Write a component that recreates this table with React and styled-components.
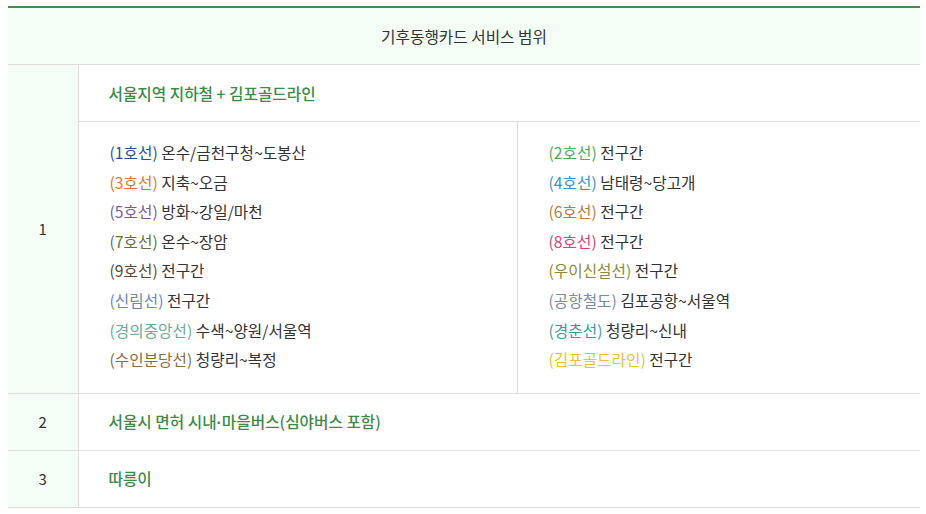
import React from "react";
import styled, { createGlobalStyle } from "styled-components";

const GlobalStyle = createGlobalStyle`
  body {
    margin: 6px 6px 0 8px;
    background: #fff;
    font-family: "Noto Sans CJK KR", "Noto Sans", sans-serif;
  }
`;

const Table = styled.table`
  width: 912px;
  border-collapse: collapse;
  table-layout: fixed;
  border-top: 2px solid #3f8f4f;
  font-size: 15.7px;
  color: #333;

  td,
  th {
    border-bottom: 1px solid #ddd;
  }
`;

const HeadCell = styled.th`
  height: 56px;
  padding: 0;
  background: #f4fdf5;
  font-weight: 400;
  text-align: center;
  color: #333;
`;

const NumCell = styled.td`
  width: 70px;
  padding: 0;
  background: #f4fdf5;
  border-right: 1px solid #ddd;
  text-align: center;
  color: #333;
  font-size: 15px;
`;

const TitleCell = styled.td`
  height: 56px;
  padding: 0 30px;
  color: #3b8a47;
  font-weight: 500;
`;

const Dot = styled.span`
  font-family: "Liberation Sans", sans-serif;
  font-weight: 700;
`;

const ListCell = styled.td`
  vertical-align: top;
  padding: 16px 30px 18px 31px;
  border-right: ${(p) => (p.$divider ? "1px solid #ddd" : "none")};
`;

const List = styled.ul`
  margin: 0;
  padding: 0;
  list-style: none;
`;

const Item = styled.li`
  line-height: 29.6px;
  white-space: nowrap;
`;

const Line = styled.span`
  color: ${(p) => p.$color};
`;

const leftLines = [
  ["1호선", "#2a4f96", "온수/금천구청~도봉산"],
  ["3호선", "#d9773a", "지축~오금"],
  ["5호선", "#7d5a9c", "방화~강일/마천"],
  ["7호선", "#63733a", "온수~장암"],
  ["9호선", "#5a4a30", "전구간"],
  ["신림선", "#6b86c0", "전구간"],
  ["경의중앙선", "#6bab96", "수색~양원/서울역"],
  ["수인분당선", "#8a6d40", "청량리~복정"],
];

const rightLines = [
  ["2호선", "#4aab5a", "전구간"],
  ["4호선", "#3a8fd0", "남태령~당고개"],
  ["6호선", "#b87a3e", "전구간"],
  ["8호선", "#d6437a", "전구간"],
  ["우이신설선", "#8a8a3a", "전구간"],
  ["공항철도", "#7a8aa8", "김포공항~서울역"],
  ["경춘선", "#3e9a9a", "청량리~신내"],
  ["김포골드라인", "#e8c040", "전구간"],
];

const LineList = ({ lines }) => (
  <List>
    {lines.map(([name, color, range]) => (
      <Item key={name}>
        <Line $color={color}>({name})</Line> {range}
      </Item>
    ))}
  </List>
);

export default function App() {
  return (
    <>
      <GlobalStyle />
      <Table>
        <colgroup>
          <col style={{ width: 70 }} />
          <col style={{ width: 439 }} />
          <col />
        </colgroup>
        <thead>
          <tr>
            <HeadCell colSpan={3}>기후동행카드 서비스 범위</HeadCell>
          </tr>
        </thead>
        <tbody>
          <tr>
            <NumCell rowSpan={2}>1</NumCell>
            <TitleCell colSpan={2}>서울지역 지하철 + 김포골드라인</TitleCell>
          </tr>
          <tr>
            <ListCell $divider>
              <LineList lines={leftLines} />
            </ListCell>
            <ListCell>
              <LineList lines={rightLines} />
            </ListCell>
          </tr>
          <tr>
            <NumCell>2</NumCell>
            <TitleCell colSpan={2}>
              서울시 면허 시내<Dot>·</Dot>마을버스(심야버스 포함)
            </TitleCell>
          </tr>
          <tr>
            <NumCell>3</NumCell>
            <TitleCell colSpan={2}>따릉이</TitleCell>
          </tr>
        </tbody>
      </Table>
    </>
  );
}
